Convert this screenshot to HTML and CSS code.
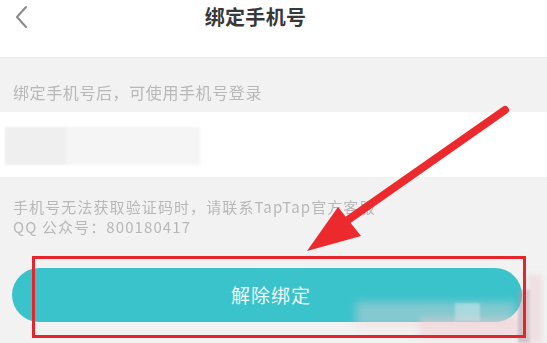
FILE: index.html
```html
<!doctype html>
<html>
<head>
<meta charset="utf-8">
<title>绑定手机号</title>
<link rel="stylesheet" href="styles.css">
</head>
<body>
<div class="page">
    <div class="bind-header">
        <a href="javascript:" class="bind-back">
            <svg width="14" height="24" viewBox="0 0 14 24"><path d="M12 2 L3 12 L12 22" fill="none" stroke="#8a8a8a" stroke-width="2" stroke-linecap="round" stroke-linejoin="round"/></svg>
        </a>
        <h1 class="bind-title">绑定手机号</h1>
    </div>
    <div class="bind-tip">绑定手机号后，可使用手机号登录</div>
    <div class="bind-field">
        <div class="bind-phone"></div>
    </div>
    <div class="bind-help">
        <p>手机号无法获取验证码时，请联系TapTap官方客服</p>
        <p>QQ 公众号：800180417</p>
    </div>
    <a href="javascript:" class="bind-btn">解除绑定</a>

    <!-- watermark blur -->
    <div class="mark">
        <i class="m1"></i><i class="m2"></i><i class="m3"></i><i class="m4"></i><i class="m5"></i>
    </div>

    <!-- annotation -->
    <svg class="note" width="547" height="343" viewBox="0 0 547 343">
        <rect x="33.5" y="257.5" width="491" height="79" fill="none" stroke="#e3262b" stroke-width="3"/>
        <line x1="505" y1="110" x2="345" y2="222" stroke="#ec2a2e" stroke-width="8" stroke-linecap="round"/>
        <polygon points="307,251 338,207 361,236" fill="#ec2a2e"/>
    </svg>
</div>
</body>
</html>
```
FILE: styles.css
```css
body { margin: 0; font-family: "Noto Sans CJK SC", "Noto Sans", sans-serif; background-color: #f2f2f2; }
p { margin: 0; }
.page { position: relative; width: 547px; height: 343px; overflow: hidden; }
.bind-header { height: 57px; background-color: #fff; display: flex; align-items: flex-start; justify-content: center; position: relative; border-bottom: 1px solid #ececec; }
.bind-back { position: absolute; left: 14px; top: 5px; }
.bind-title { margin: 3px 36px 0 0; font-size: 20px; line-height: 28px; font-weight: bold; color: #383838; letter-spacing: 0.3px; }
.bind-tip { height: 54px; padding: 22px 0 0 13px; box-sizing: border-box; font-size: 16px; line-height: 24px; letter-spacing: 0.6px; color: #b8b8b8; filter: blur(0.4px); }
.bind-field { height: 65px; background-color: #fff; padding: 15px 0 0 5px; box-sizing: border-box; }
.bind-phone { width: 195px; height: 38px; background: linear-gradient(90deg, #efefef 0, #efefef 60px, #f5f5f5 62px, #f5f5f5 100%); filter: blur(1px); }
.bind-help { padding: 20px 0 0 13px; font-size: 15px; line-height: 20px; letter-spacing: 1.1px; color: #b8b8b8; filter: blur(0.4px); }
.bind-btn { display: block; height: 54px; margin: 31px 25px 0 12px; border-radius: 27px; background-color: #3bc3cb; color: #eefafb; text-align: center; line-height: 54px; font-size: 19px; letter-spacing: 1px; text-decoration: none; padding-left: 8px; }
.mark { position: absolute; left: 0; top: 0; width: 547px; height: 343px; pointer-events: none; }
.mark i { position: absolute; display: block; }
.mark .m1 { left: 356px; top: 302px; width: 160px; height: 25px; background: rgba(245, 210, 215, 0.4); filter: blur(4px); }
.mark .m2 { left: 455px; top: 303px; width: 25px; height: 18px; background: rgba(205, 235, 238, 0.5); filter: blur(1px); }
.mark .m3 { left: 420px; top: 318px; width: 100px; height: 20px; background: rgba(240, 205, 210, 0.5); filter: blur(3px); }
.mark .m4 { left: 518px; top: 290px; width: 12px; height: 53px; background: rgba(175, 155, 165, 0.5); filter: blur(1px); }
.mark .m5 { left: 528px; top: 275px; width: 14px; height: 68px; background: rgba(235, 210, 215, 0.55); filter: blur(2px); }
.note { position: absolute; left: 0; top: 0; pointer-events: none; }
```
